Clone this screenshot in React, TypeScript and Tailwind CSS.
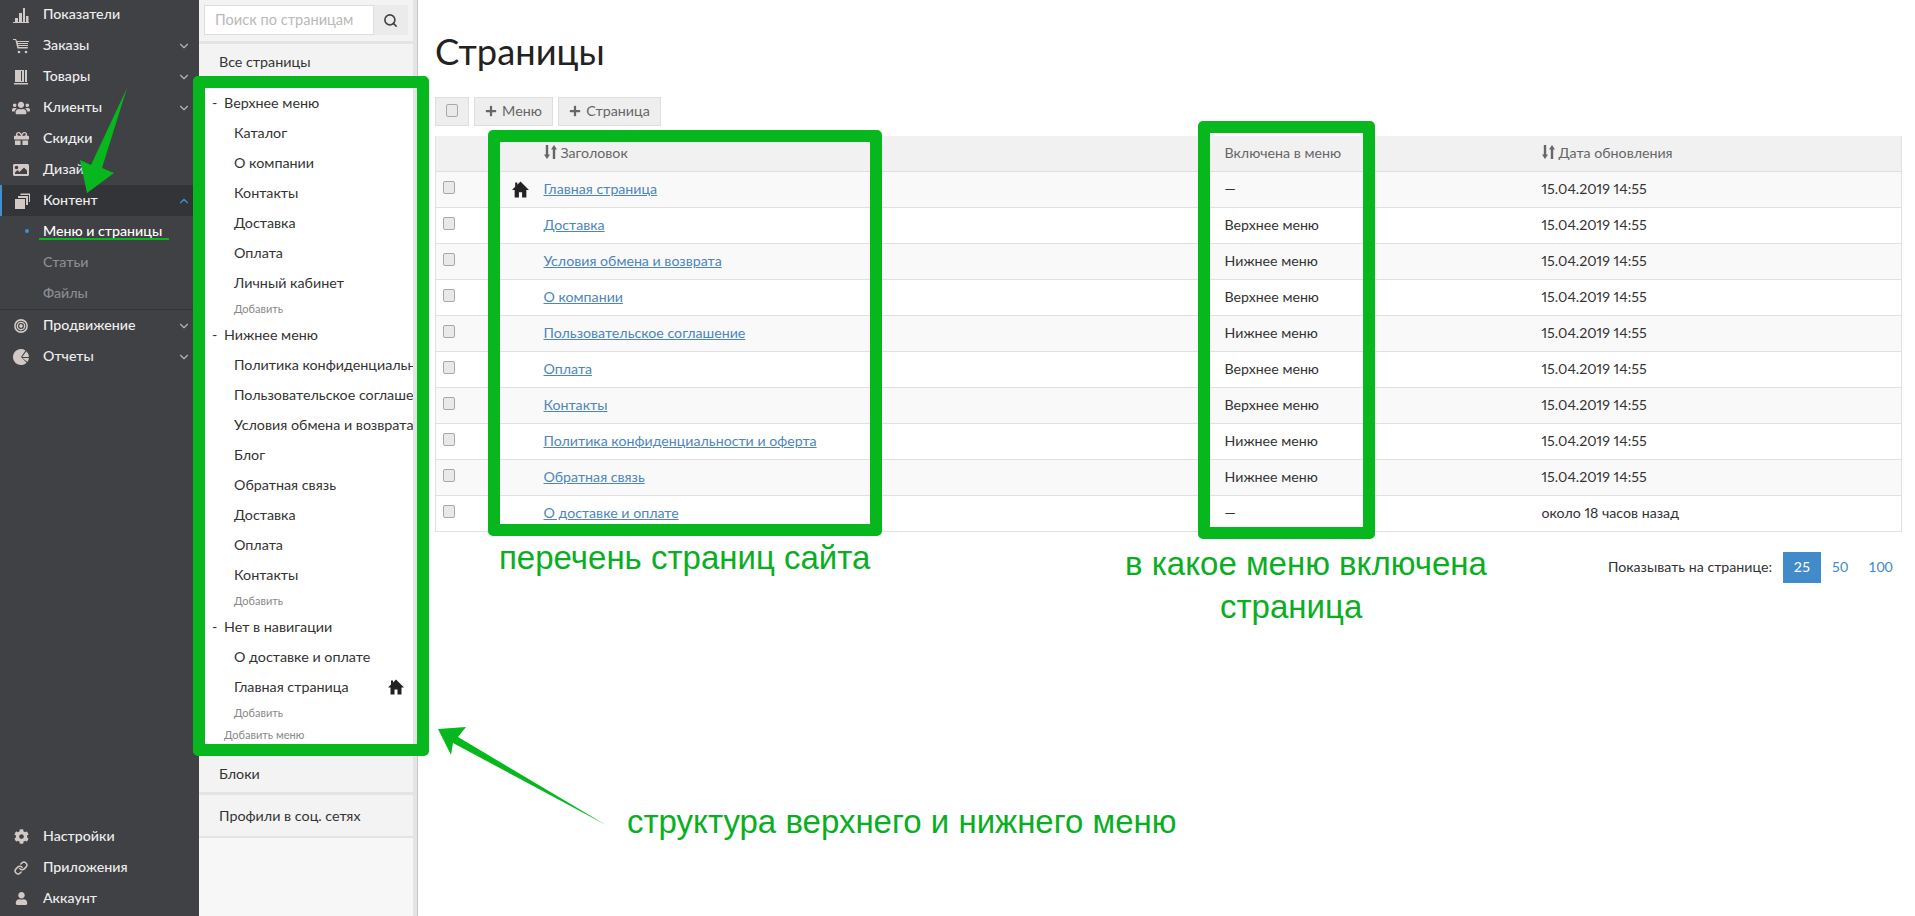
import React from "react";
import { ChevronDown, ChevronUp, Link as LinkIcon, Search } from "lucide-react";
import { FaCog, FaGift, FaImage, FaPlus, FaUser, FaUsers } from "react-icons/fa";

const BarsIcon = () => (
  <svg viewBox="0 0 16 16" className="w-[16px] h-[16px]" fill="currentColor">
    <path d="M0 15h16v1H0zM2 11h3v4H2zM6 6h3v9H6zM10 1h2v14h-2zM13 9h2.5v6H13z" />
  </svg>
);
const CartIcon = () => (
  <svg viewBox="0 0 16 16" className="w-[16px] h-[16px]" fill="currentColor">
    <path d="M0 1h3l1 2h12v1H4.600l.2 1H15v1H5l.2 1H15v1H5.400l.2 1H15l-.4 1.500H4.400L2.400 2H0z" />
    <circle cx="6" cy="14" r="1.300" />
    <circle cx="13" cy="14" r="1.300" />
  </svg>
);
const BooksIcon = () => (
  <svg viewBox="0 0 16 16" className="w-[16px] h-[16px]" fill="currentColor">
    <path d="M2 1h9v12H2zM12 1h2v12h-2zM1 14h14v1.400H1z" fillRule="evenodd" />
    <path d="M8 2h1v10H8z" fill="#404145" />
    <path d="M11 1h1v12h-1z" fill="#404145" />
  </svg>
);
const LayersIcon = () => (
  <svg viewBox="0 0 16 16" className="w-[16px] h-[16px]" fill="currentColor">
    <path d="M1 6h10v10H1z" />
    <path d="M4 3h10v9h-2V5H4zM6.500 0.500H16V9h-1V2H6.500z" />
  </svg>
);
const TargetIcon = () => (
  <svg viewBox="0 0 16 16" className="w-[14px] h-[14px]" fill="none" stroke="currentColor">
    <circle cx="8" cy="8" r="7" strokeWidth="1.800" />
    <circle cx="8" cy="8" r="4.200" strokeWidth="1.600" />
    <circle cx="8" cy="8" r="1.600" fill="currentColor" />
  </svg>
);
const PieIcon = () => (
  <svg viewBox="0 0 16 16" className="w-[16px] h-[16px]" fill="currentColor">
    <path d="M8 0a8 8 0 1 0 5.600 13.700L8 8l4.500-6.600A8 8 0 0 0 8 0z" />
    <path d="M13.300 2.200L9.200 8l6.800 0a8 8 0 0 0-2.700-5.800zM9.400 9l5 4a8 8 0 0 0 1.500-4z" />
  </svg>
);
const SortIcon = () => (
  <svg viewBox="0 0 13 14" className="w-[13px] h-[14px] shrink-0" fill="currentColor">
    <path d="M1.800 0h2.400v9.500H6L3 14 0 9.500h1.800zM8.800 14h2.400V4.500H13L10 0 7 4.500h1.800z" />
  </svg>
);
const HomeIcon = ({ className }: { className: string }) => (
  <svg viewBox="0 0 16 16" className={className} fill="currentColor">
    <path d="M8 0.500L16 8.500H13.500V15.500H9.500V10.500H6.500V15.500H2.500V8.500H0L3 5.500V1.500H5V3.500z" />
  </svg>
);

const top = [
  { t: "Показатели", i: <BarsIcon /> },
  { t: "Заказы", i: <CartIcon />, c: true },
  { t: "Товары", i: <BooksIcon />, c: true },
  { t: "Клиенты", i: <FaUsers size={18} />, c: true },
  { t: "Скидки", i: <FaGift size={15} /> },
  { t: "Дизайн", i: <FaImage size={16} /> },
];

function NavRow({ t, i, c }: { t: string; i: React.ReactNode; c?: boolean }) {
  return (
    <div className="flex h-[31px] items-center text-[14.2px] font-medium text-[#eeeeee]">
      <span className="flex w-[43px] shrink-0 items-center justify-center pr-[1px] text-[#d2c8c6]">{i}</span>
      <span className="flex-1 whitespace-nowrap pb-[1px]">{t}</span>
      {c && <ChevronDown size={14} className="mr-[8px] text-[#b5b5b5]" />}
    </div>
  );
}

function Sidebar() {
  return (
    <aside className="flex w-[199px] shrink-0 flex-col justify-between bg-[#404145] -mt-px pb-[2px]">
      <div>
        {top.map((r) => (
          <NavRow key={r.t} {...r} />
        ))}
        <div className="flex h-[31px] items-center border-l-2 border-[#3f8fd2] bg-[#333438] text-[14.2px] font-medium text-[#eeeeee]">
          <span className="flex w-[41px] shrink-0 items-center justify-center pr-[1px] text-[#d2c8c6]">
            <LayersIcon />
          </span>
          <span className="flex-1 pb-[1px]">Контент</span>
          <ChevronUp size={14} className="mr-[8px] text-[#3f8fd2]" />
        </div>
        <div className="border-b border-[#333438]">
          <div className="flex h-[31px] items-center pb-[1px] text-[14.2px] font-medium text-[#ffffff]">
            <span className="flex w-[43px] shrink-0 justify-center pl-[11px]">
              <span className="h-[4px] w-[4px] rounded-full bg-[#3f8fd2]" />
            </span>
            Меню и страницы
          </div>
          <div className="flex h-[31px] items-center pb-[1px] pl-[43px] text-[14.2px] font-medium text-[#8d8d8f]">Статьи</div>
          <div className="flex h-[31px] items-center pb-[1px] pl-[43px] text-[14.2px] font-medium text-[#8d8d8f]">Файлы</div>
        </div>
        <NavRow t="Продвижение" i={<TargetIcon />} c />
        <NavRow t="Отчеты" i={<PieIcon />} c />
      </div>
      <div>
        <NavRow t="Настройки" i={<FaCog size={15} />} />
        <NavRow t="Приложения" i={<LinkIcon size={14} strokeWidth={2.6} />} />
        <NavRow t="Аккаунт" i={<FaUser size={13} />} />
      </div>
    </aside>
  );
}

const H = ({ t }: { t: string }) => (
  <div className="flex h-[30px] items-center pl-[13px] text-[14.3px] text-[#333333]">
    <span className="w-[12px]">-</span>
    {t}
  </div>
);
const L = ({ t, home }: { t: string; home?: boolean }) => (
  <div className="flex h-[30px] items-center justify-between whitespace-nowrap pl-[35px] pr-[9px] text-[14.3px] text-[#333333]">
    <span>{t}</span>
    {home && <HomeIcon className="h-[16px] w-[16px] shrink-0 text-[#222222]" />}
  </div>
);
const Add = ({ t = "Добавить", menu }: { t?: string; menu?: boolean }) => (
  <div className={`flex h-[22px] items-center text-[11px] text-[#888888] ${menu ? "pl-[25px]" : "pl-[35px]"}`}>{t}</div>
);

function PagesPanel() {
  return (
    <div className="flex w-[219px] shrink-0 border-r border-r-[#c8c8c8]">
      <div className="flex w-[214px] flex-col bg-[#f7f7f7]">
        <div className="flex h-[44px] border-b-[3px] border-[#e3e3e3] bg-[#f3f3f3] px-[5px] pt-[5px] pb-[6px]">
          <div className="flex h-[30px] w-[174px] items-center border border-[#dddddd] bg-white pl-[10px] text-[14.6px] text-[#b9b9b9]">
            Поиск по страницам
          </div>
          <div className="flex h-[30px] w-[35px] items-center justify-center bg-[#ebebeb] text-[#444444]">
            <Search size={15} strokeWidth={2.6} />
          </div>
        </div>
        <div className="flex h-[35px] shrink-0 items-center bg-[#f3f3f3] pl-[20px] text-[14.3px] text-[#333333]">Все страницы</div>
        <div className="h-[677px] shrink-0 overflow-hidden bg-white pt-[9px]">
          <H t="Верхнее меню" />
          {["Каталог", "О компании", "Контакты", "Доставка", "Оплата", "Личный кабинет"].map((t) => (
            <L key={t} t={t} />
          ))}
          <Add />
          <H t="Нижнее меню" />
          {[
            "Политика конфиденциальности и оферта",
            "Пользовательское соглашение",
            "Условия обмена и возврата",
            "Блог",
            "Обратная связь",
            "Доставка",
            "Оплата",
            "Контакты",
          ].map((t) => (
            <L key={t} t={t} />
          ))}
          <Add />
          <H t="Нет в навигации" />
          <L t="О доставке и оплате" />
          <L t="Главная страница" home />
          <Add />
          <Add t="Добавить меню" menu />
        </div>
        <div className="flex h-[39px] shrink-0 items-center border-b-[3px] border-[#e3e3e3] bg-[#f3f3f3] pl-[20px] text-[14.3px] text-[#333333]">Блоки</div>
        <div className="flex h-[43px] shrink-0 items-center border-b-[2px] border-[#e3e3e3] bg-[#f3f3f3] pl-[20px] text-[14.3px] text-[#333333]">Профили в соц. сетях</div>
      </div>
      <div className="w-[4px] bg-[#e4e4e4]" />
    </div>
  );
}

const rows = [
  ["Главная страница", "—", "15.04.2019 14:55", true],
  ["Доставка", "Верхнее меню", "15.04.2019 14:55"],
  ["Условия обмена и возврата", "Нижнее меню", "15.04.2019 14:55"],
  ["О компании", "Верхнее меню", "15.04.2019 14:55"],
  ["Пользовательское соглашение", "Нижнее меню", "15.04.2019 14:55"],
  ["Оплата", "Верхнее меню", "15.04.2019 14:55"],
  ["Контакты", "Верхнее меню", "15.04.2019 14:55"],
  ["Политика конфиденциальности и оферта", "Нижнее меню", "15.04.2019 14:55"],
  ["Обратная связь", "Нижнее меню", "15.04.2019 14:55"],
  ["О доставке и оплате", "—", "около 18 часов назад"],
] as const;

const Check = () => <span className="block h-[13px] w-[12px] rounded-[2px] border border-[#a8a8a8] bg-[#e9e9e9]" />;

function Main() {
  return (
    <main className="min-w-0 flex-1 pl-[17px] pr-[13px]">
      <h1 className="h-[97px] pt-[27px] text-[36.3px] leading-[48px] text-[#222222]">Страницы</h1>
      <div className="flex h-[39px] items-start gap-[5px] text-[14.3px] text-[#666666]">
        <div className="flex h-[29px] w-[34px] items-center justify-center border border-[#dedede] bg-[#eeeeee] pb-[2px]">
          <Check />
        </div>
        <div className="flex h-[29px] w-[79px] items-center justify-center gap-[5px] border border-[#dedede] bg-[#eeeeee] pb-[1px]">
          <FaPlus size={12} />
          Меню
        </div>
        <div className="flex h-[29px] w-[103px] items-center justify-center gap-[5px] border border-[#dedede] bg-[#eeeeee] pb-[1px]">
          <FaPlus size={12} />
          Страница
        </div>
      </div>
      <table className="w-full table-fixed border-collapse border-x border-b border-[#e2e2e2] text-[14.2px] text-[#333333]">
        <colgroup>
          <col className="w-[70px]" />
          <col className="w-[26px]" />
          <col className="w-[681px]" />
          <col className="w-[317px]" />
          <col />
        </colgroup>
        <thead>
          <tr className="h-[35px] border-b border-[#e0e0e0] bg-[#f1f1f1] text-left text-[#666666]">
            <th />
            <th />
            <th className="pb-[2px] pl-[12px] font-normal">
              <span className="flex items-center gap-[4px]">
                <SortIcon />
                Заголовок
              </span>
            </th>
            <th className="pb-[2px] pl-[12px] font-normal">Включена в меню</th>
            <th className="pb-[2px] pl-[12px] font-normal">
              <span className="flex items-center gap-[4px]">
                <SortIcon />
                Дата обновления
              </span>
            </th>
          </tr>
        </thead>
        <tbody className="proportional-nums">
          {rows.map((r, i) => (
            <tr key={r[0]} className={`h-[36px] border-b border-[#e0e0e0] ${i % 2 === 0 ? "bg-[#f9f9f9]" : "bg-white"}`}>
              <td className="pb-[3px] pl-[7px]">
                <Check />
              </td>
              <td>
                {r[3] && <HomeIcon className="ml-[6px] h-[17px] w-[17px] text-[#222222]" />}
              </td>
              <td className="pl-[12px]">
                <a className="text-[#4d86bb] underline">{r[0]}</a>
              </td>
              <td className="pl-[12px]">{r[1]}</td>
              <td className="pl-[12px]">{r[2]}</td>
            </tr>
          ))}
        </tbody>
      </table>
      <div className="mt-[20px] flex h-[31px] items-center justify-end text-[14.2px] text-[#333333]">
        <span className="mr-[11px]">Показывать на странице:</span>
        <span className="flex h-[31px] w-[38px] items-center justify-center bg-[#428bca] text-white">25</span>
        <span className="flex h-[31px] w-[38px] items-center justify-center text-[#428bca]">50</span>
        <span className="flex h-[31px] w-[43px] items-center justify-center text-[#428bca]">100</span>
      </div>
    </main>
  );
}

function Annotations() {
  return (
    <>
      <div className="absolute left-[193px] top-[76px] h-[680px] w-[236px] rounded-[5px] border-[12px] border-[#07b71e]" />
      <div className="absolute left-[488px] top-[130px] h-[406px] w-[394px] rounded-[5px] border-[12px] border-[#07b71e]" />
      <div className="absolute left-[1198px] top-[121px] h-[418px] w-[177px] rounded-[5px] border-[12px] border-[#07b71e]" />
      <div className="absolute left-[39px] top-[238px] h-[2px] w-[130px] bg-[#07b71e]" />
      <svg className="absolute left-0 top-0 h-[916px] w-[1915px] pointer-events-none" viewBox="0 0 1915 916" fill="#07b71e">
        <polygon points="127,88 102,168 114,173 87,193 80,160 91,165" />
        <polygon points="438,729 466,727 458,737 606,825 453,743 451,755" />
      </svg>
      <div className="absolute left-[499px] top-[538px] whitespace-nowrap text-[33px] leading-[40px] text-[#0aae22]">перечень страниц сайта</div>
      <div className="absolute left-[1125px] top-[544px] whitespace-nowrap text-[33px] leading-[40px] text-[#0aae22]">в какое меню включена</div>
      <div className="absolute left-[1220px] top-[587px] whitespace-nowrap text-[33px] leading-[40px] text-[#0aae22]">страница</div>
      <div className="absolute left-[627px] top-[802px] whitespace-nowrap text-[33px] leading-[40px] text-[#0aae22]">структура верхнего и нижнего меню</div>
    </>
  );
}

export default function App() {
  return (
    <div className="relative flex h-[916px] w-full overflow-hidden bg-white font-['Lato','Open_Sans',sans-serif]">
      <Sidebar />
      <PagesPanel />
      <Main />
      <div className="font-['Liberation_Sans',sans-serif]">
        <Annotations />
      </div>
    </div>
  );
}
